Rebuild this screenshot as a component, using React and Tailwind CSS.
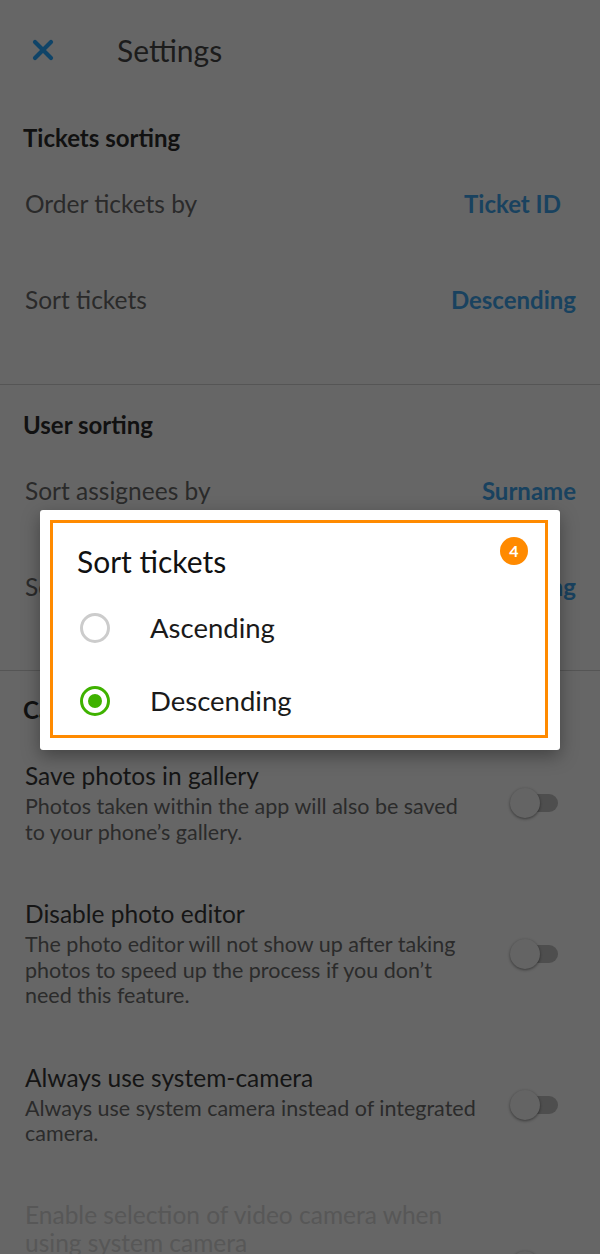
import React from "react";

const font = { fontFamily: "Lato, 'Noto Sans', sans-serif" };

function Toggle({ className = "" }) {
  return (
    <div className={`relative h-[30px] w-[50px] shrink-0 ${className}`}>
      <div className="absolute left-[8px] top-[6px] h-[18px] w-[40px] rounded-full bg-[#4e4e4e]" />
      <div className="absolute left-0 top-0 h-[30px] w-[30px] rounded-full bg-[#646464] shadow-[0_1px_3px_rgba(0,0,0,0.45)]" />
    </div>
  );
}

function ValueRow({ label, value, pr = "pr-[24px]" }) {
  return (
    <div className={`flex h-[96px] items-center justify-between pl-[25px] ${pr}`}>
      <span className="text-[24.5px] text-[#2a2a2a]">{label}</span>
      <span className="text-[24px] font-bold text-[#19425f]">{value}</span>
    </div>
  );
}

function SwitchItem({ title, text, muted }) {
  return (
    <div className={`flex justify-between pl-[25px] pr-[40px] ${muted ? "items-start" : "items-center"}`}>
      <div className="w-[454px]">
        <p className={muted ? "text-[24.5px] leading-[28px] text-[#575757]" : "text-[24.5px] leading-[30px] text-[#151515]"}>{title}</p>
        {text && <p className="mt-[3px] text-[21.5px] leading-[25.5px] text-[#2b2b2b]">{text}</p>}
      </div>
      <Toggle className={muted ? "mt-[50px]" : ""} />
    </div>
  );
}

export default function App() {
  return (
    <div className="relative h-[1254px] w-[600px] overflow-hidden bg-[#666666]" style={font}>
      <div className="flex h-[100px] items-center pl-[31px]">
        <svg width="24" height="24" viewBox="0 0 24 24" className="text-[#0f4468]">
          <path d="M4 4 L20 20 M20 4 L4 20" stroke="currentColor" strokeWidth="4.2" strokeLinecap="round" />
        </svg>
        <span className="ml-[62px] text-[30px] text-[#1c1c1c]">Settings</span>
      </div>

      <section className="pt-[24px] pb-[36px]">
        <p className="mb-[4px] pl-[23px] text-[24px] font-bold leading-[28px] text-[#111]">Tickets sorting</p>
        <ValueRow label="Order tickets by" value="Ticket ID" pr="pr-[39px]" />
        <ValueRow label="Sort tickets" value="Descending" />
      </section>
      <div className="h-px bg-[#555555]" />

      <section className="pt-[26px] pb-[35px]">
        <p className="mb-[4px] pl-[23px] text-[24px] font-bold leading-[28px] text-[#111]">User sorting</p>
        <ValueRow label="Sort assignees by" value="Surname" />
        <ValueRow label="Sort assignees" value="Descending" />
      </section>
      <div className="h-px bg-[#555555]" />

      <section className="flex flex-col gap-[54px] pt-[25px]">
        <p className="-mb-[17px] pl-[23px] text-[24px] font-bold leading-[28px] text-[#111]">Camera</p>
        <SwitchItem title="Save photos in gallery" text="Photos taken within the app will also be saved to your phone’s gallery." />
        <SwitchItem title="Disable photo editor" text="The photo editor will not show up after taking photos to speed up the process if you don’t need this feature." />
        <SwitchItem title="Always use system-camera" text="Always use system camera instead of integrated camera." />
        <SwitchItem muted title="Enable selection of video camera when using system camera" />
      </section>

      <div className="absolute left-[40px] top-[510px] h-[240px] w-[520px] rounded-[3px] bg-white p-[10px] pr-[12px] pb-[12px] shadow-[0_6px_18px_rgba(0,0,0,0.35)]">
        <div className="relative h-full border-[3px] border-[#ff8a00] pl-[24px]">
          <p className="pt-[21px] text-[30px] leading-[34px] text-[#111]">Sort tickets</p>
          <div className="mt-[30px] flex h-[40px] items-center pl-[3px]">
            <span className="h-[30px] w-[30px] rounded-full border-[3px] border-[#cccccc]" />
            <span className="ml-[40px] text-[27.5px] text-[#1a1a1a]">Ascending</span>
          </div>
          <div className="mt-[33px] flex h-[40px] items-center pl-[3px]">
            <span className="flex h-[30px] w-[30px] items-center justify-center rounded-full border-[3px] border-[#3fb200]">
              <span className="h-[14px] w-[14px] rounded-full bg-[#3fb200]" />
            </span>
            <span className="ml-[40px] text-[27.5px] text-[#1a1a1a]">Descending</span>
          </div>
          <span className="absolute right-[17px] top-[14px] flex h-[28px] w-[28px] items-center justify-center rounded-full bg-[#ff8a00] text-[16px] font-bold text-white">4</span>
        </div>
      </div>
    </div>
  );
}
